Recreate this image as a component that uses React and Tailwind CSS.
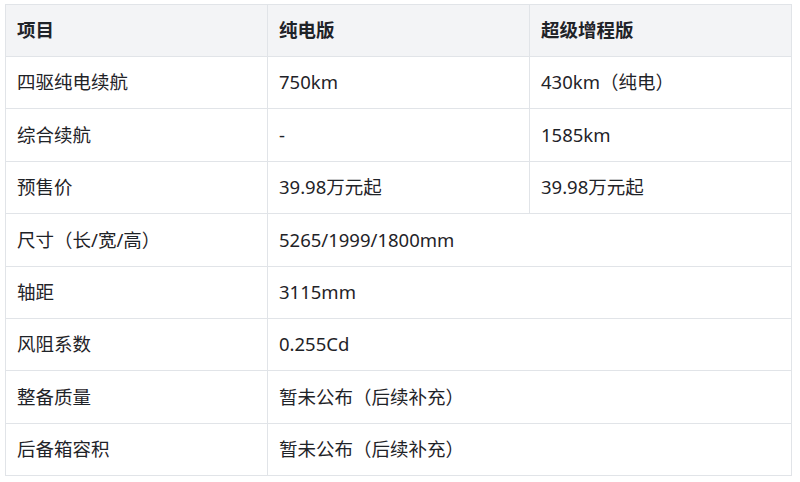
import React from "react";

const rows = [
  ["四驱纯电续航", "750km", "430km（纯电）"],
  ["综合续航", "-", "1585km"],
  ["预售价", "39.98万元起", "39.98万元起"],
  ["尺寸（长/宽/高）", "5265/1999/1800mm"],
  ["轴距", "3115mm"],
  ["风阻系数", "0.255Cd"],
  ["整备质量", "暂未公布（后续补充）"],
  ["后备箱容积", "暂未公布（后续补充）"],
];

export default function App() {
  return (
    <div
      className="w-[800px] h-[482px] bg-white pt-[4px] pl-[5px]"
      style={{ fontFamily: '"Noto Sans", "Noto Sans CJK SC", sans-serif' }}
    >
      <table className="w-[787px] border-collapse table-fixed text-[18.5px] leading-none text-[#1f2328]">
        <colgroup>
          <col className="w-[262px]" />
          <col className="w-[262px]" />
          <col />
        </colgroup>
        <thead>
          <tr className="h-[52px] bg-[#f3f4f6]">
            {["项目", "纯电版", "超级增程版"].map((h) => (
              <th key={h} className="border border-[#e1e4e8] px-[11px] text-left font-bold">
                {h}
              </th>
            ))}
          </tr>
        </thead>
        <tbody>
          {rows.map((r) => (
            <tr key={r[0]} className="h-[52.4px]">
              <td className="border border-[#e1e4e8] px-[11px]">{r[0]}</td>
              {r.length === 3 ? (
                <>
                  <td className="border border-[#e1e4e8] px-[11px]">{r[1]}</td>
                  <td className="border border-[#e1e4e8] px-[11px]">{r[2]}</td>
                </>
              ) : (
                <td colSpan={2} className="border border-[#e1e4e8] px-[11px]">
                  {r[1]}
                </td>
              )}
            </tr>
          ))}
        </tbody>
      </table>
    </div>
  );
}
